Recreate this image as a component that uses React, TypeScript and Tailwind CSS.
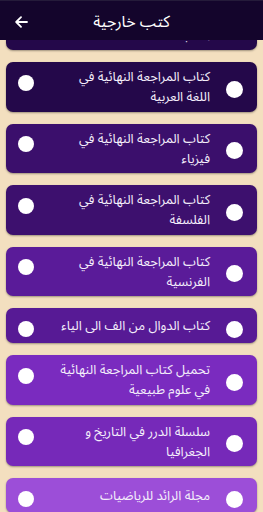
import React from "react";

type Book = { lines: string[]; bg: string };

const books: Book[] = [
  { lines: ["كتاب المراجعة النهائية في", "الأدب"], bg: "bg-[#24084a]" },
  { lines: ["كتاب المراجعة النهائية في", "اللغة العربية"], bg: "bg-[#24084a]" },
  { lines: ["كتاب المراجعة النهائية في", "فيزياء"], bg: "bg-[#3b0f6c]" },
  { lines: ["كتاب المراجعة النهائية في", "الفلسفة"], bg: "bg-[#3d106e]" },
  { lines: ["كتاب المراجعة النهائية في", "الفرنسية"], bg: "bg-[#5a1b99]" },
  { lines: ["كتاب الدوال من الف الى الياء"], bg: "bg-[#571a95]" },
  { lines: ["تحميل كتاب المراجعة النهائية", "في علوم طبيعية"], bg: "bg-[#7a2bbf]" },
  { lines: ["سلسلة الدرر في التاريخ و", "الجغرافيا"], bg: "bg-[#7629b9]" },
  { lines: ["مجلة الرائد للرياضيات"], bg: "bg-[#9c4ed8]" },
];

function BookRow({ book }: { book: Book }) {
  const twoLines = book.lines.length > 1;
  return (
    <div
      dir="rtl"
      className={`flex shrink-0 items-stretch rounded-[7px] pl-3 pr-[14px] shadow-[0_1px_2px_rgba(0,0,0,0.35)] ${
        twoLines ? "h-[49.5px] pt-[5px]" : "h-[35px] pt-[7.5px]"
      } ${book.bg}`}
    >
      <span className="h-[17px] w-[17px] shrink-0 self-center rounded-full bg-white" />
      <div className="ml-2 mr-4 flex-1 self-start text-right text-[13px] leading-[20px] text-[#f4eefb]">
        {book.lines.map((l) => (
          <div key={l} className="whitespace-nowrap">
            {l}
          </div>
        ))}
      </div>
      <span
        className={`h-[16px] w-[16px] shrink-0 rounded-full bg-white ${
          twoLines ? "mt-[7.5px] self-start" : "self-center"
        }`}
      />
    </div>
  );
}

export default function App() {
  return (
    <div
      className="flex h-[512px] w-full flex-col overflow-hidden bg-[#f3dfbf]"
      style={{ fontFamily: '"Noto Sans Arabic", "DejaVu Sans", sans-serif' }}
    >
      {/* شريط العنوان */}
      <header className="relative z-10 flex h-10 shrink-0 items-center border-t border-[#251b3a] bg-[#14052c] px-[15px] pt-[3px]">
        <svg width="13" height="12" viewBox="0 0 13 12" fill="none" className="shrink-0">
          <path
            d="M12 6H1.5M6 1.2 1.2 6 6 10.8"
            stroke="white"
            strokeWidth="1.8"
            strokeLinecap="round"
            strokeLinejoin="round"
          />
        </svg>
        <h1 className="flex-1 pr-[13px] text-center text-[16px] leading-[22px] text-white">كتب خارجية</h1>
      </header>

      <div className="flex-1 overflow-hidden">
        <div className="-mt-[39.5px] flex flex-col gap-3 px-[6px]">
          {books.map((b, i) => (
            <BookRow key={i} book={b} />
          ))}
        </div>
      </div>
    </div>
  );
}
